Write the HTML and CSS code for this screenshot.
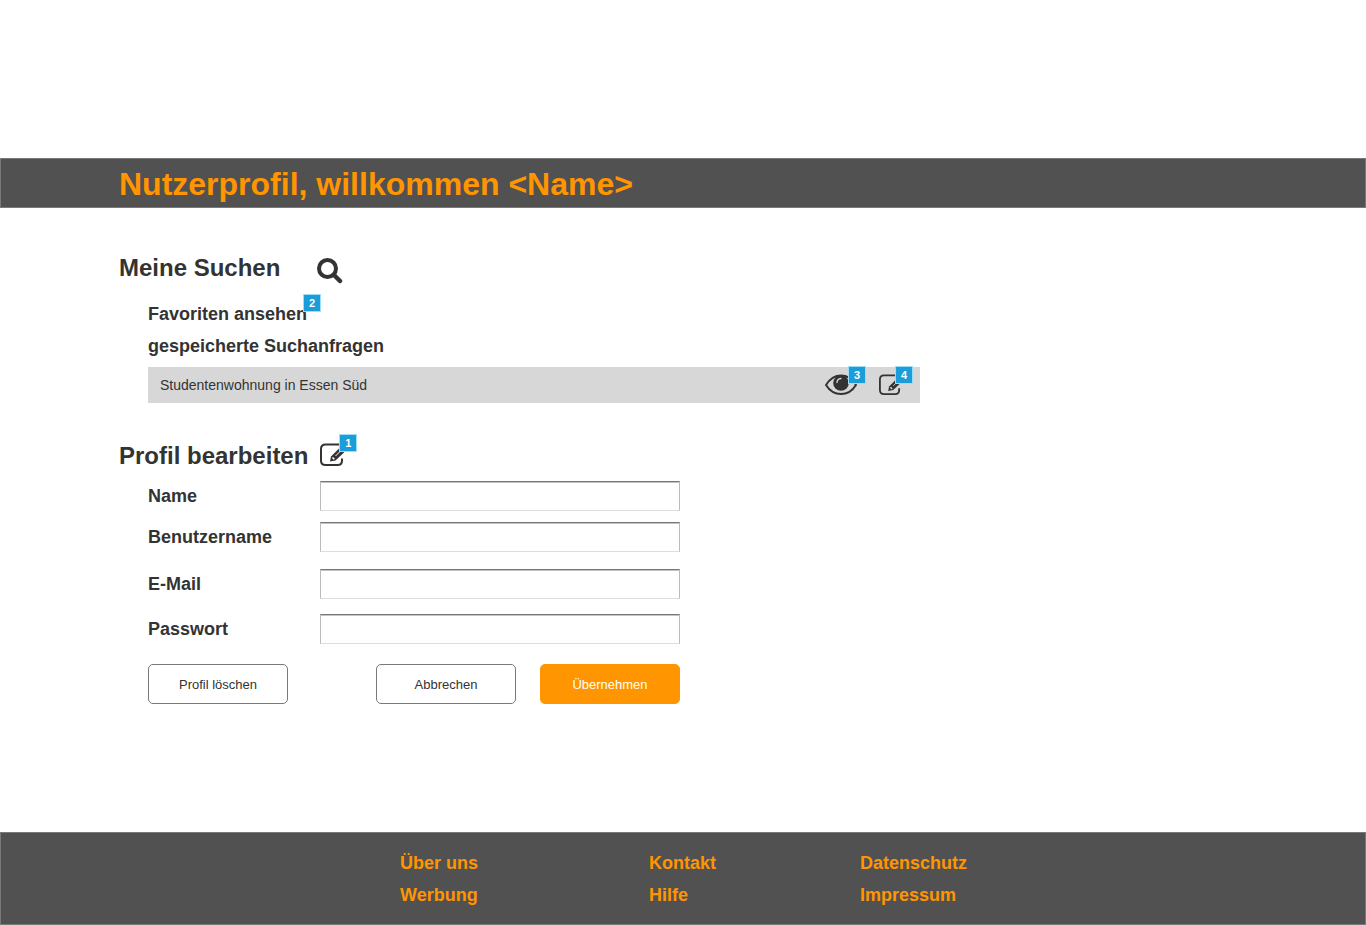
FILE: index.html
```html
<!DOCTYPE html>
<html lang="de">
<head>
<meta charset="utf-8">
<title>Nutzerprofil</title>
<link rel="stylesheet" href="styles.css">
</head>
<body>
<svg class="symbols" aria-hidden="true">
  <symbol id="edit" viewBox="0 0 24 24">
    <path d="M20 1.500H5.500Q1 1.500 1 6v11.500Q1 22 5.500 22h12Q22 22 22 17.500V15.500" fill="none" stroke="currentColor" stroke-width="2"/>
    <path d="M10 18.500L11 13.500L20.500 4l4.500 4.500L15.500 17.500z" fill="currentColor"/>
    <path d="M12.500 14.500l1.800 1.800" stroke="var(--icon-gap, #fff)" stroke-width="1.600"/>
    <path d="M15.500 13l6-6" stroke="var(--icon-gap, #fff)" stroke-width="1"/>
  </symbol>
</svg>
<header class="banner"><h1>Nutzerprofil, willkommen &lt;Name&gt;</h1></header>
<main class="content">
  <section class="searches">
    <div class="heading heading-search">
      <h2>Meine Suchen</h2>
      <svg class="icon-search" viewBox="0 0 26 26" aria-hidden="true">
        <circle cx="10.500" cy="10.500" r="8.500" fill="none" stroke="currentColor" stroke-width="4"/>
        <path d="M17 17l6 6" stroke="currentColor" stroke-width="4.500" stroke-linecap="round"/>
      </svg>
    </div>
    <div class="indent">
      <h3><span class="anchor">Favoriten ansehen<span class="badge badge-text">2</span></span></h3>
      <h3>gespeicherte Suchanfragen</h3>
      <div class="saved">
        <span>Studentenwohnung in Essen Süd</span>
        <span class="actions">
          <button type="button" class="icon-button anchor" aria-label="Ansehen">
            <svg class="icon-eye" viewBox="0 0 32 22" aria-hidden="true">
              <path d="M1 11C5 4.500 10 1.500 16 1.500S27 4.500 31 11C27 17.500 22 20 16 20S5 17.500 1 11z" fill="none" stroke="currentColor" stroke-width="2"/>
              <circle cx="16" cy="9" r="7.800" fill="currentColor"/>
              <path d="M12 8.500q0-3.500 4-4" fill="none" stroke="#d7d7d7" stroke-width="1.300" stroke-linecap="round"/>
            </svg>
            <span class="badge badge-eye">3</span>
          </button>
          <button type="button" class="icon-button anchor" aria-label="Suche bearbeiten">
            <svg class="icon-edit small" aria-hidden="true"><use href="#edit"/></svg>
            <span class="badge badge-edit-small">4</span>
          </button>
        </span>
      </div>
    </div>
  </section>
  <section class="profile">
    <div class="heading heading-profile">
      <h2>Profil bearbeiten</h2>
      <button type="button" class="icon-button anchor" aria-label="Profil bearbeiten">
        <svg class="icon-edit" aria-hidden="true"><use href="#edit"/></svg>
        <span class="badge badge-edit">1</span>
      </button>
    </div>
    <form class="indent form">
      <div class="field"><label for="name">Name</label><input id="name" type="text"></div>
      <div class="field field-loose"><label for="user">Benutzername</label><input id="user" type="text"></div>
      <div class="field"><label for="mail">E-Mail</label><input id="mail" type="email"></div>
      <div class="field"><label for="pass">Passwort</label><input id="pass" type="password"></div>
      <div class="buttons">
        <button type="button" class="button delete">Profil löschen</button>
        <button type="button" class="button">Abbrechen</button>
        <button type="submit" class="button primary">Übernehmen</button>
      </div>
    </form>
  </section>
</main>
<footer class="footer">
  <nav class="column"><a href="#">Über uns</a><a href="#">Werbung</a></nav>
  <nav class="column"><a href="#">Kontakt</a><a href="#">Hilfe</a></nav>
  <nav class="column"><a href="#">Datenschutz</a><a href="#">Impressum</a></nav>
</footer>
</body>
</html>
```
FILE: styles.css
```css
* { box-sizing: border-box; }
body {
  display: flex;
  flex-direction: column;
  min-height: 100vh;
  margin: 0;
  padding-top: 158px;
  background: #fff;
  color: #333;
  font-family: "Liberation Sans", Arial, sans-serif;
}
h1, h2, h3 { margin: 0; }
h1 { font-size: 32px; line-height: 36px; }
h2 { font-size: 24px; line-height: 28px; }
h3 { font-size: 18px; line-height: 32px; }
.symbols { position: absolute; width: 0; height: 0; }
.banner {
  padding: 7px 118px 5px;
  border: 1px solid #797979;
  background: #515151;
  color: #ff9500;
}
.content { flex: 1; padding: 46px 119px 40px; }
.indent { padding-left: 29px; }
.heading { display: flex; align-items: center; }
.heading-search { gap: 37px; height: 32px; margin-bottom: 12px; }
.heading-search h2 { margin-bottom: 4px; }
.icon-search { width: 26px; height: 26px; margin-top: 2px; }
.heading-profile { gap: 12px; height: 28px; }
.heading-profile h2 { padding-top: 2px; }
.icon-edit { display: block; width: 24px; height: 24px; overflow: visible; }
.icon-edit.small { width: 22px; height: 22px; --icon-gap: #d7d7d7; }
.icon-eye { display: block; width: 32px; height: 22px; }
.icon-button { padding: 0; border: 0; background: none; color: inherit; font: inherit; }
.anchor { position: relative; }
.badge {
  position: absolute;
  width: 18px;
  height: 18px;
  border: 1px solid #9fdcf5;
  background: #1a9dd9;
  color: #fff;
  font-size: 11px;
  font-weight: bold;
  line-height: 16px;
  text-align: center;
}
.badge-text { right: -14px; top: -10px; }
.badge-eye { left: 23px; top: -8px; }
.badge-edit-small { left: 16px; top: -8px; }
.badge-edit { left: 19px; top: -9px; }
.saved {
  display: flex;
  align-items: center;
  justify-content: space-between;
  max-width: 772px;
  height: 36px;
  margin-top: 5px;
  padding: 0 19px 0 12px;
  background: #d7d7d7;
  font-size: 14px;
}
.actions { display: flex; align-items: center; gap: 22px; }
.profile { margin-top: 38px; }
.form { display: flex; flex-direction: column; gap: 15px; max-width: 561px; margin-top: 12px; }
.field { display: flex; align-items: center; }
.field:first-child { margin-bottom: -4px; }
.field-loose { margin-bottom: 2px; }
.field label { width: 172px; font-size: 18px; font-weight: bold; }
.field input {
  flex: 1;
  min-width: 0;
  height: 30px;
  padding: 2px 6px;
  border: 1px solid #bbb;
  border-top-color: #767676;
  border-bottom-color: #ddd;
  border-radius: 0;
  box-shadow: inset 0 1px #c4c4c4;
  font: 14px "Liberation Sans", Arial, sans-serif;
}
.buttons { display: flex; justify-content: flex-end; gap: 24px; margin-top: 5px; }
.button {
  width: 140px;
  height: 40px;
  padding: 0;
  border: 1px solid #797979;
  border-radius: 5px;
  background: #fff;
  color: #333;
  font: 13px "Liberation Sans", Arial, sans-serif;
}
.delete { margin-right: auto; }
.primary { border-color: #ff9500; background: #ff9500; color: #fff; }
.footer {
  display: flex;
  justify-content: center;
  gap: 40px;
  padding: 14px 0 13px 1px;
  border: 1px solid #797979;
  background: #515151;
}
.column { display: flex; flex-direction: column; }
.column:nth-child(1) { width: 209px; }
.column:nth-child(2) { width: 171px; }
.column a { color: #ff9500; font-size: 18px; font-weight: bold; line-height: 32px; text-decoration: none; }
```
